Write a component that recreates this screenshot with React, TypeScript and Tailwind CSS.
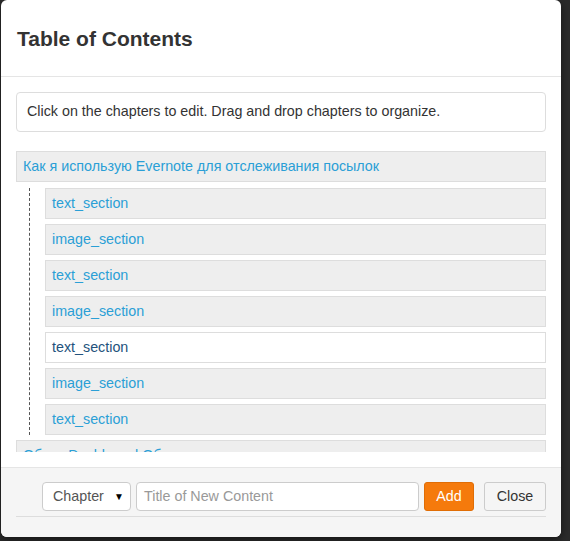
const sections = [
  { title: "text_section", active: false },
  { title: "image_section", active: false },
  { title: "text_section", active: false },
  { title: "image_section", active: false },
  { title: "text_section", active: true },
  { title: "image_section", active: false },
  { title: "text_section", active: false },
];

export default function App() {
  return (
    <div
      className="w-[570px] h-[541px] bg-[#2b2b2b] overflow-hidden text-[14.3px]"
      style={{ fontFamily: '"Liberation Sans", Arial, sans-serif' }}
    >
      <div className="ml-[1px] w-[560px] h-[537px] bg-white rounded-[6px] flex flex-col shadow-[0_3px_9px_rgba(0,0,0,0.5)]">
        {/* header */}
        <div className="h-[77px] shrink-0 border-b border-[#e5e5e5] flex items-center px-[16px]">
          <h4 className="text-[21px] font-bold text-[#333] leading-none">Table of Contents</h4>
        </div>

        {/* body */}
        <div className="px-[15px] pt-[15px] flex-1 flex flex-col min-h-0">
          <div className="h-[40px] shrink-0 border border-[#ddd] rounded-[4px] flex items-center px-[10px] text-[#333]">
            Click on the chapters to edit. Drag and drop chapters to organize.
          </div>

          <div className="mt-[19px] h-[301px] overflow-hidden">
            <div className="h-[31px] mb-[6px] bg-[#eee] border border-[#ddd] flex items-center px-[6px] text-[#2a9fd6] whitespace-nowrap">
              Как я использую Evernote для отслеживания посылок
            </div>
            <div className="ml-[13px] border-l border-dashed border-[#555] pl-[15px]">
              {sections.map((s, i) => (
                <div
                  key={i}
                  className={
                    s.active
                      ? "h-[31px] mb-[5px] bg-white border border-[#ddd] flex items-center px-[6px] text-[#23527c]"
                      : "h-[31px] mb-[5px] bg-[#eee] border border-[#ddd] flex items-center px-[6px] text-[#2a9fd6]"
                  }
                >
                  {s.title}
                </div>
              ))}
            </div>
            <div className="h-[31px] bg-[#eee] border border-[#ddd] flex items-center px-[6px] text-[#2a9fd6] whitespace-nowrap">
              Обзор Dashboard Обзор
            </div>
          </div>
        </div>

        {/* footer */}
        <div className="h-[70px] shrink-0 border-t border-[#e5e5e5] bg-[#f5f5f5] rounded-b-[6px] px-[15px] pt-[14px]">
          <div className="flex items-center justify-end gap-[5px] pb-[5px] border-b border-[#ddd]">
            <div className="w-[89px] h-[29px] bg-white border border-[#ccc] rounded-[4px] flex items-center justify-between pl-[10px] pr-[6px] text-[#555]">
              <span>Chapter</span>
              <span className="text-[10px] text-black">▼</span>
            </div>
            <div className="w-[283px] h-[29px] bg-white border border-[#ccc] rounded-[4px] flex items-center px-[7px] text-[#999]">
              Title of New Content
            </div>
            <button className="w-[50px] h-[29px] bg-[#f57a0c] border border-[#e06d05] rounded-[3px] text-white">
              Add
            </button>
            <button className="ml-[5px] w-[62px] h-[29px] bg-[#f5f5f5] border border-[#ccc] rounded-[3px] text-[#333]">
              Close
            </button>
          </div>
        </div>
      </div>
    </div>
  );
}
